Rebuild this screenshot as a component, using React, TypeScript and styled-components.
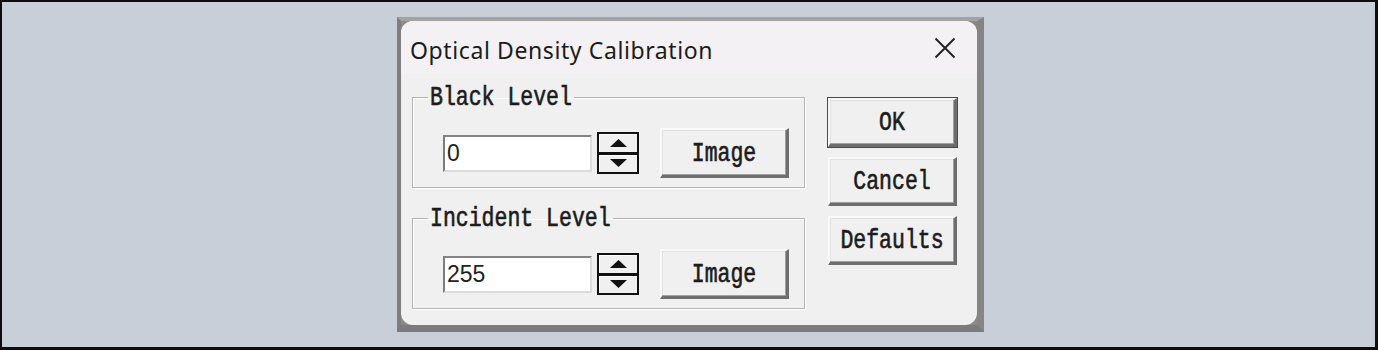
import React from 'react';
import styled, { createGlobalStyle } from 'styled-components';

const GlobalStyle = createGlobalStyle`
  html, body {
    margin: 0;
    padding: 0;
    background: #c8cfd8;
  }
`;

const Screen = styled.div`
  width: 1378px;
  height: 350px;
  box-sizing: border-box;
  border-style: solid;
  border-color: #0d0d0d;
  border-width: 2px 3px 3px 2px;
  background: #c8cfd8;
  padding: 15px 0 0 395px;
`;

const Window = styled.div`
  width: 587px;
  height: 315px;
  box-sizing: border-box;
  border-style: solid;
  border-width: 4px 7px 7px 4px;
  border-color: #a3a3a3 #858585 #7b7b7b #7e7e7e;
  background: #8a8a8a;
`;

const Panel = styled.div`
  height: 100%;
  display: flex;
  flex-direction: column;
  border-radius: 12px;
  overflow: hidden;
  background: #f0f0f0;
`;

const TitleBar = styled.div`
  height: 52px;
  flex: none;
  display: flex;
  align-items: center;
  justify-content: space-between;
  box-sizing: border-box;
  padding: 6px 20px 0 9px;
  background: #f4f1f4;
`;

const Title = styled.div`
  font-family: 'Noto Sans', 'Open Sans', sans-serif;
  font-size: 23px;
  color: #1b1b1b;
  letter-spacing: 0.6px;
`;

const CloseButton = styled.button`
  width: 24px;
  height: 24px;
  padding: 0;
  margin-top: -4px;
  border: none;
  background: transparent;
  display: flex;
  align-items: center;
  justify-content: center;
  color: #222;
`;

const Body = styled.div`
  flex: 1;
  display: flex;
  align-items: flex-start;
  gap: 23px;
  padding: 13px 20px 0 11px;
`;

const Groups = styled.div`
  width: 393px;
  display: flex;
  flex-direction: column;
  gap: 19px;
`;

const Group = styled.fieldset`
  margin: 0;
  padding: 0;
  height: 102px;
  box-sizing: border-box;
  min-width: 0;
  border: 1px solid #b4b4b4;
  box-shadow: inset 1px 1px 0 #fff, 1px 1px 0 #fff;
`;

const Legend = styled.legend`
  margin-left: 15px;
  padding: 0 2px;
  height: 22px;
  line-height: 22px;
  font-family: 'Liberation Mono', monospace;
  font-size: 21.5px;
  color: #1c1c1c;
`;

const Mono = styled.span`
  display: inline-block;
  transform: scaleY(1.25);
  font-family: 'Liberation Mono', monospace;
  font-size: 21.5px;
  font-weight: normal;
  -webkit-text-stroke: 0.5px #1c1c1c;
  line-height: 22px;
  color: #1c1c1c;
`;

const Row = styled.div`
  display: flex;
  align-items: center;
  margin-top: 20px;
  padding-left: 30px;
`;

const NumberField = styled.input`
  width: 149px;
  height: 37px;
  box-sizing: border-box;
  margin: 0;
  padding: 0 2px;
  border-style: solid;
  border-width: 2px;
  border-color: #848484 #dcdcdc #dcdcdc #7c7c7c;
  background: #fff;
  font-family: 'Liberation Sans', Arial, sans-serif;
  font-size: 23px;
  color: #222;
  outline: none;
`;

const Spinner = styled.div`
  width: 42px;
  height: 42px;
  margin-left: 5px;
  box-sizing: border-box;
  border: 2px solid #111;
  display: flex;
  flex-direction: column;
`;

const SpinHalf = styled.div<{ $top?: boolean }>`
  flex: 1;
  display: flex;
  align-items: center;
  justify-content: center;
  background: #f0f0f0;
  box-shadow: inset 1px 1px 0 #fff;
  border-bottom: ${(p) => (p.$top ? '3px solid #111' : 'none')};
`;

const PushButton = styled.button<{ $default?: boolean }>`
  width: 129px;
  height: 49px;
  box-sizing: border-box;
  margin: 0;
  padding: 0;
  display: flex;
  align-items: center;
  justify-content: center;
  background: #f0f0f0;
  border-style: solid;
  border-width: 2px 3px 3px 2px;
  border-color: #f8f8f8 #6e6e6e #6e6e6e #f8f8f8;
  box-shadow: ${(p) =>
    p.$default
      ? '0 0 0 1px #4a4a4a, inset -1px -1px 0 #a0a0a0, inset 1px 1px 0 #e2e2e2'
      : 'inset -1px -1px 0 #a0a0a0, inset 1px 1px 0 #e2e2e2'};
`;

const ImageButton = styled(PushButton)`
  margin-left: 21px;
  height: 50px;
`;

const Buttons = styled.div`
  width: 129px;
  display: flex;
  flex-direction: column;
  gap: 10px;
  padding-top: 12px;
`;

const Arrow = ({ up }: { up?: boolean }) => (
  <svg width="17" height="8" viewBox="0 0 17 8">
    <polygon points={up ? '8.5,0 17,8 0,8' : '0,0 17,0 8.5,8'} fill="#111" />
  </svg>
);

const LevelGroup = ({ label, value }: { label: string; value: string }) => (
  <Group>
    <Legend>
      <Mono>{label}</Mono>
    </Legend>
    <Row>
      <NumberField defaultValue={value} readOnly />
      <Spinner>
        <SpinHalf $top>
          <Arrow up />
        </SpinHalf>
        <SpinHalf>
          <Arrow />
        </SpinHalf>
      </Spinner>
      <ImageButton type="button">
        <Mono>Image</Mono>
      </ImageButton>
    </Row>
  </Group>
);

export default function App() {
  return (
    <>
      <GlobalStyle />
      <Screen>
        <Window>
          <Panel>
            <TitleBar>
              <Title>Optical Density Calibration</Title>
              <CloseButton type="button" aria-label="Close">
                <svg width="22" height="22" viewBox="0 0 22 22">
                  <path d="M1.5 1.5 20.5 20.5M20.5 1.5 1.5 20.5" stroke="currentColor" strokeWidth="1.9" />
                </svg>
              </CloseButton>
            </TitleBar>
            <Body>
              <Groups>
                <LevelGroup label="Black Level" value="0" />
                <LevelGroup label="Incident Level" value="255" />
              </Groups>
              <Buttons>
                <PushButton type="button" $default>
                  <Mono>OK</Mono>
                </PushButton>
                <PushButton type="button">
                  <Mono>Cancel</Mono>
                </PushButton>
                <PushButton type="button">
                  <Mono>Defaults</Mono>
                </PushButton>
              </Buttons>
            </Body>
          </Panel>
        </Window>
      </Screen>
    </>
  );
}
